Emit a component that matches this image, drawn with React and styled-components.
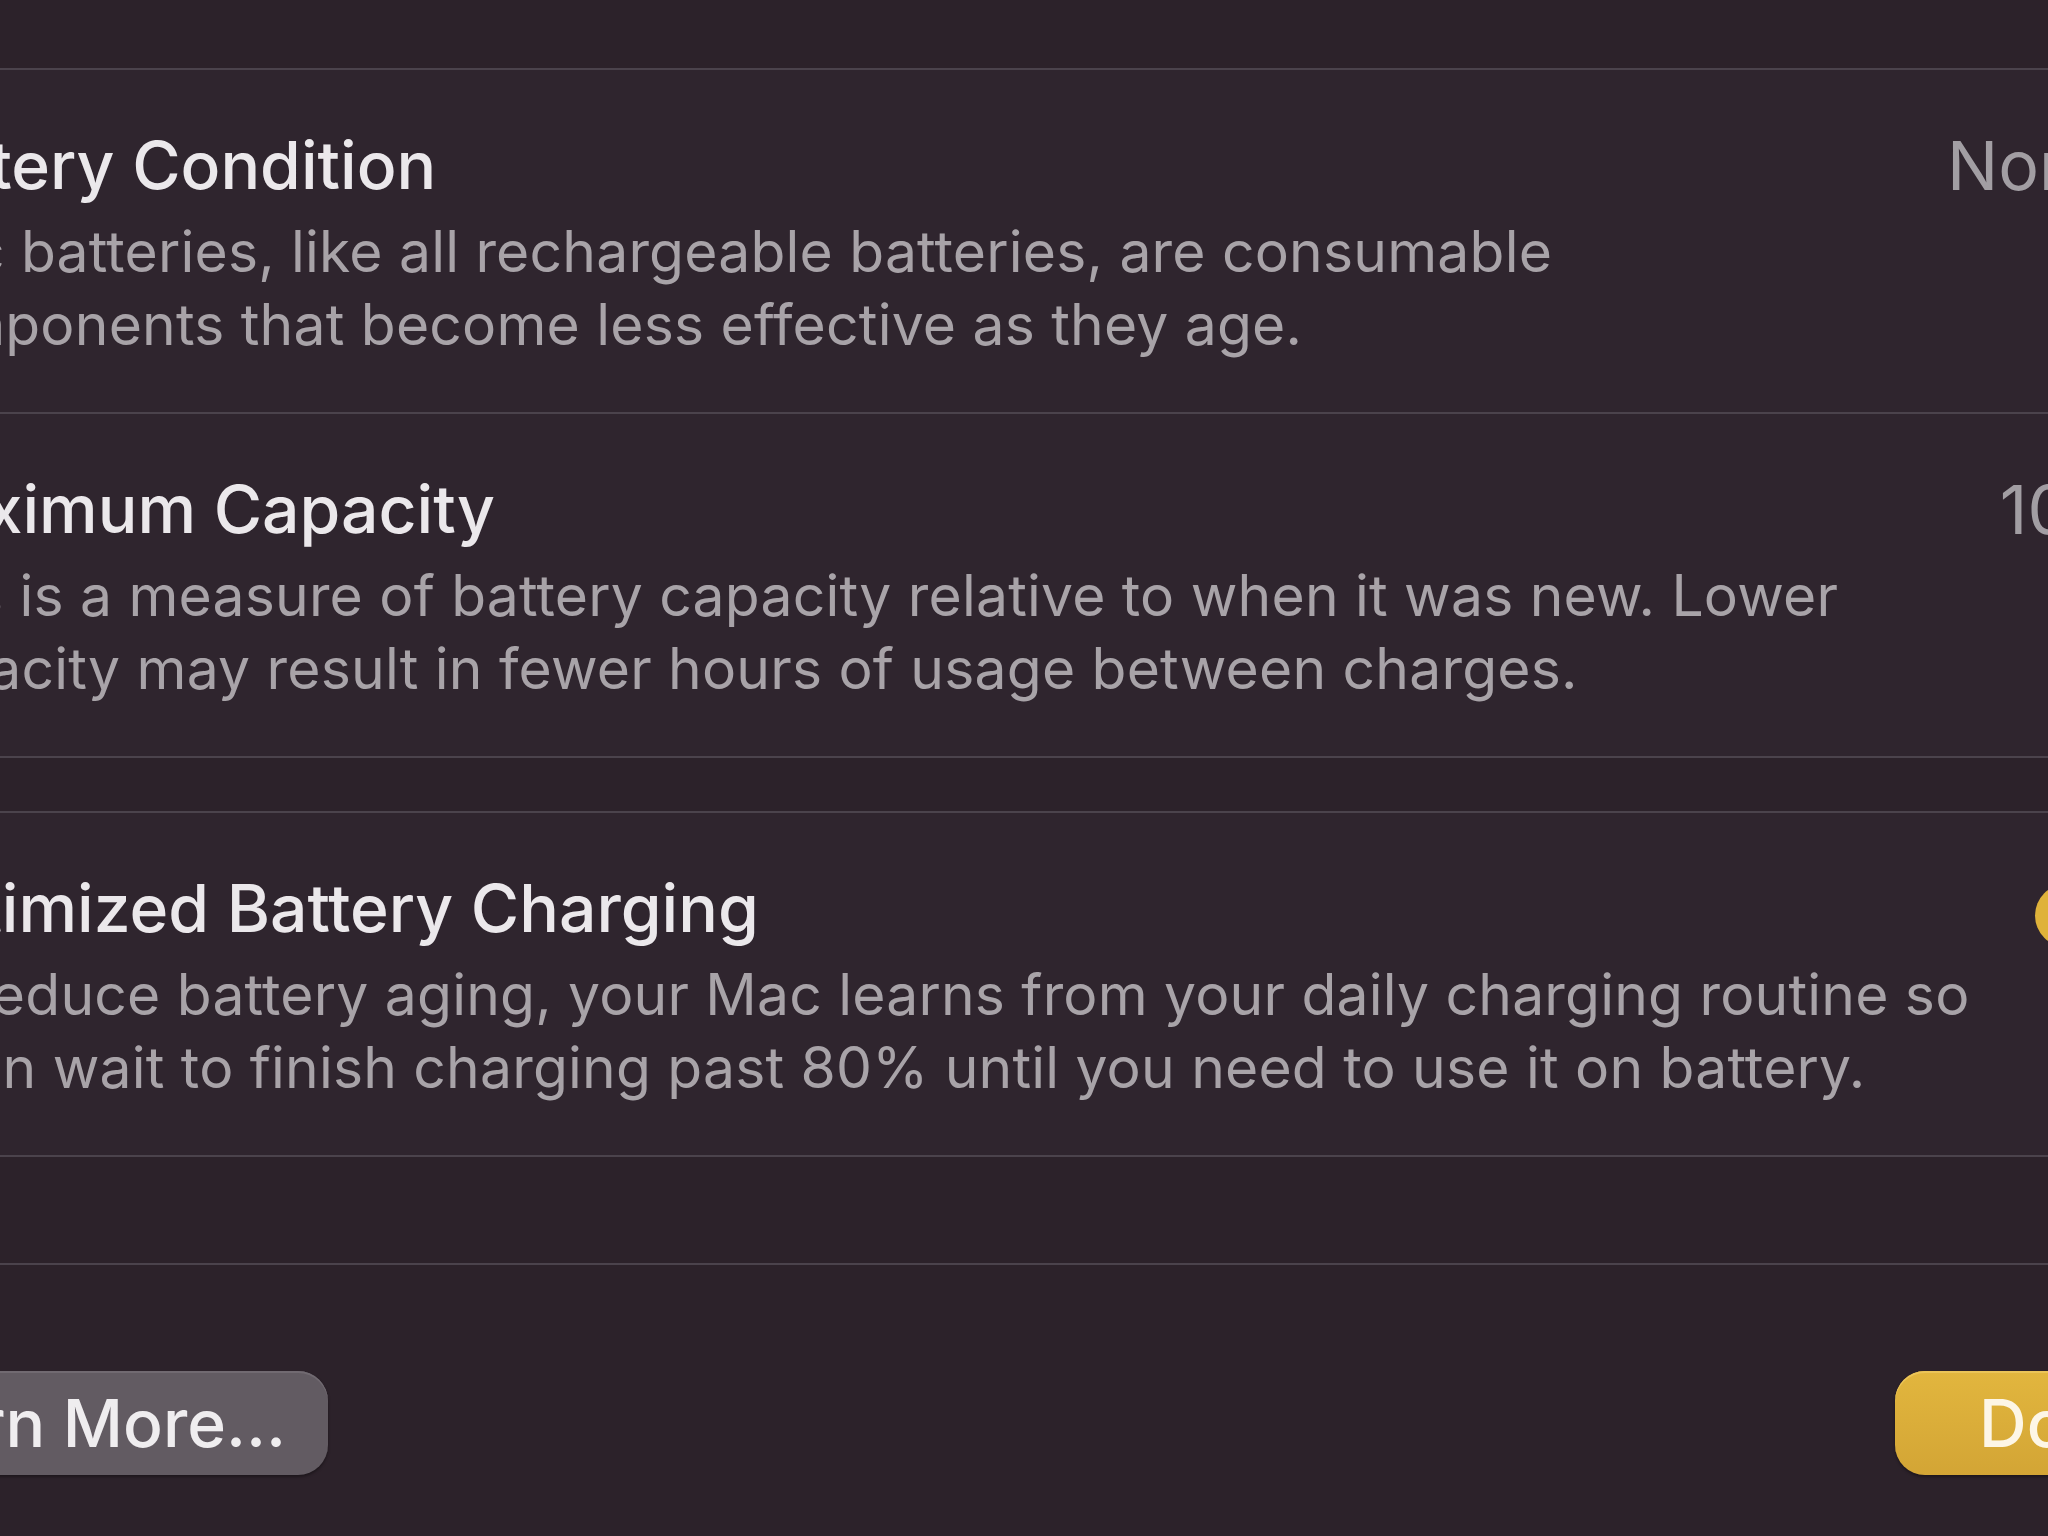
import React from 'react';
import styled, { createGlobalStyle } from 'styled-components';

const GlobalStyle = createGlobalStyle`
  html, body {
    margin: 0;
    padding: 0;
    background: #2c222a;
    overflow: hidden;
  }
  body {
    font-family: "Inter", "Liberation Sans", sans-serif;
    -webkit-font-smoothing: antialiased;
  }
`;

const Sheet = styled.div`
  width: 2292px;
  margin-left: -112px;
  display: flex;
  flex-direction: column;
  height: 1536px;
`;

const TopSpace = styled.div`
  height: 68px;
`;

const Group = styled.section`
  background: #2f252e;
  border-top: 2px solid #4b434c;
  border-bottom: 2px solid #4b434c;
`;

const Row = styled.div`
  display: flex;
  justify-content: space-between;
  align-items: flex-start;
  padding: 55px 0 51px;

  & + & {
    border-top: 2px solid #4b434c;
  }
`;

const TextBlock = styled.div`
  display: flex;
  flex-direction: column;
  gap: 10px;
`;

const Title = styled.div`
  font-size: 66px;
  line-height: 80px;
  font-weight: 500;
  color: #ebe8eb;
  white-space: nowrap;
`;

const Description = styled.div`
  font-size: 57px;
  line-height: 73px;
  letter-spacing: 0.2px;
  color: #a8a3a8;
  white-space: nowrap;
`;

const Value = styled.div`
  font-size: 68px;
  line-height: 80px;
  color: #a29ea3;
`;

const Toggle = styled.div`
  margin-top: 16px;
  width: 145px;
  height: 63px;
  border-radius: 32px;
  background: #dfb23a;
  position: relative;

  &::after {
    content: '';
    position: absolute;
    top: 4px;
    right: 4px;
    width: 55px;
    height: 55px;
    border-radius: 50%;
    background: #f4f1f4;
  }
`;

const GroupGap = styled.div`
  height: 53px;
`;

const Footer = styled.footer`
  border-top: 2px solid #4b434c;
  margin: 106px 0 0;
  padding: 106px 0 0;
  display: flex;
  justify-content: space-between;
  align-items: flex-start;
`;

const ButtonBar = styled.div`
  flex: 1;
  margin: 0 -65px;
  display: flex;
  justify-content: space-between;
`;

const Button = styled.button`
  height: 104px;
  border: none;
  border-radius: 30px;
  padding: ${(p) => (p.$primary ? '0 100px 0 84px' : '0 42px')};
  font-family: inherit;
  font-size: 66px;
  font-weight: 500;
  color: ${(p) => (p.$primary ? '#fdf6e6' : '#efedef')};
  background: ${(p) =>
    p.$primary
      ? 'linear-gradient(180deg, #e2b63e 0%, #d3a535 100%)'
      : '#625b62'};
  box-shadow: inset 0 2px 0 ${(p) => (p.$primary ? '#ebc458' : '#716a71')},
    0 2px 3px rgba(0, 0, 0, 0.35);
`;

const rows = [
  {
    title: 'Battery Condition',
    value: 'Normal',
    lines: [
      'Mac batteries, like all rechargeable batteries, are consumable',
      'components that become less effective as they age.',
    ],
  },
  {
    title: 'Maximum Capacity',
    value: '100%',
    lines: [
      'This is a measure of battery capacity relative to when it was new. Lower',
      'capacity may result in fewer hours of usage between charges.',
    ],
  },
];

export default function App() {
  return (
    <>
      <GlobalStyle />
      <Sheet>
        <TopSpace />
        <Group>
          {rows.map((r) => (
            <Row key={r.title}>
              <TextBlock>
                <Title>{r.title}</Title>
                <Description>
                  {r.lines[0]}
                  <br />
                  {r.lines[1]}
                </Description>
              </TextBlock>
              <Value>{r.value}</Value>
            </Row>
          ))}
        </Group>
        <GroupGap />
        <Group>
          <Row>
            <TextBlock>
              <Title>Optimized Battery Charging</Title>
              <Description>
                To reduce battery aging, your Mac learns from your daily charging routine so
                <br />
                it can wait to finish charging past 80% until you need to use it on battery.
              </Description>
            </TextBlock>
            <Toggle />
          </Row>
        </Group>
        <Footer>
          <ButtonBar>
            <Button>Learn More…</Button>
            <Button $primary>Done</Button>
          </ButtonBar>
        </Footer>
      </Sheet>
    </>
  );
}
